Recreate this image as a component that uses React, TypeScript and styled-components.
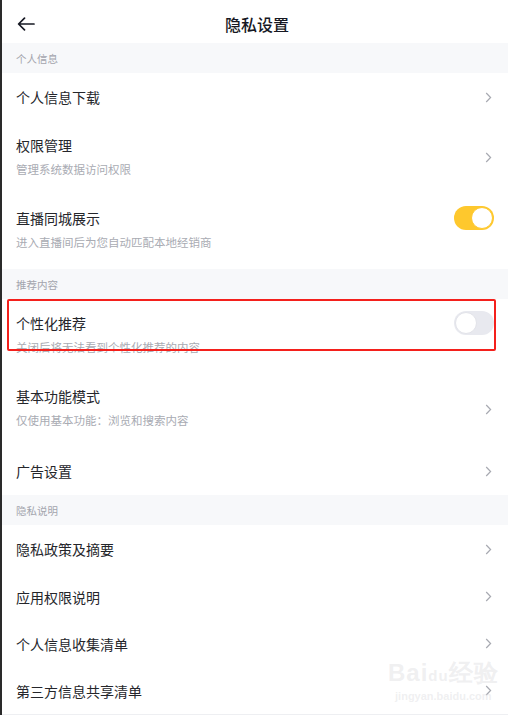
import styled, { createGlobalStyle } from "styled-components";

const GlobalStyle = createGlobalStyle`
  html, body {
    margin: 0;
    padding: 0;
    background: #ffffff;
  }
  body {
    font-family: "Noto Sans CJK SC", "Noto Sans", sans-serif;
    -webkit-font-smoothing: antialiased;
  }
`;

interface RowData {
  title: string;
  sub?: string;
  kind: "arrow" | "on" | "off";
  h: number;
  highlight?: boolean;
}

interface Group {
  label: string;
  rows: RowData[];
}

const groups: Group[] = [
  {
    label: "个人信息",
    rows: [
      { title: "个人信息下载", kind: "arrow", h: 48 },
      { title: "权限管理", sub: "管理系统数据访问权限", kind: "arrow", h: 73 },
      { title: "直播同城展示", sub: "进入直播间后为您自动匹配本地经销商", kind: "on", h: 75 },
    ],
  },
  {
    label: "推荐内容",
    rows: [
      { title: "个性化推荐", sub: "关闭后将无法看到个性化推荐的内容", kind: "off", h: 73, highlight: true },
      { title: "基本功能模式", sub: "仅使用基本功能：浏览和搜索内容", kind: "arrow", h: 75 },
      { title: "广告设置", kind: "arrow", h: 48 },
    ],
  },
  {
    label: "隐私说明",
    rows: [
      { title: "隐私政策及摘要", kind: "arrow", h: 48 },
      { title: "应用权限说明", kind: "arrow", h: 47 },
      { title: "个人信息收集清单", kind: "arrow", h: 47 },
      { title: "第三方信息共享清单", kind: "arrow", h: 47 },
    ],
  },
];

const Chevron = () => (
  <ChevronBox width="7" height="11" viewBox="0 0 7 11">
    <polyline points="1.2,1 5.6,5.5 1.2,10" fill="none" stroke="#a7a9b1" strokeWidth="1.2" />
  </ChevronBox>
);

const BackArrow = () => (
  <svg width="18" height="14" viewBox="0 0 18 14">
    <path d="M17 7 H2 M7.5 1.2 L1.6 7 L7.5 12.8" fill="none" stroke="#161823" strokeWidth="1.7" strokeLinecap="round" strokeLinejoin="round" />
  </svg>
);

const SettingRow = ({ row }: { row: RowData }) => (
  <Row h={row.h} double={!!row.sub}>
    <TextCol>
      <Title>{row.title}</Title>
      {row.sub && <Sub>{row.sub}</Sub>}
    </TextCol>
    {row.kind === "arrow" && <Chevron />}
    {row.kind !== "arrow" && (
      <Switch on={row.kind === "on"}>
        <Knob on={row.kind === "on"} />
      </Switch>
    )}
    {row.highlight && <Highlight />}
  </Row>
);

export default function App() {
  return (
    <>
      <GlobalStyle />
      <Page>
        <Header>
          <BackButton>
            <BackArrow />
          </BackButton>
          <HeaderTitle>隐私设置</HeaderTitle>
        </Header>
        {groups.map((g) => (
          <section key={g.label}>
            <GroupLabel>{g.label}</GroupLabel>
            {g.rows.map((r) => (
              <SettingRow key={r.title} row={r} />
            ))}
          </section>
        ))}
        <BottomLine />
        <Watermark>
          <WmMain>Bai<WmPaw>du</WmPaw>经验</WmMain>
          <WmSub>jingyan.baidu.com</WmSub>
        </Watermark>
      </Page>
    </>
  );
}

const Page = styled.div`
  position: relative;
  width: 508px;
  height: 715px;
  box-sizing: border-box;
  border-left: 2px solid #2a2a2a;
  overflow: hidden;
  background: #ffffff;
`;

const Header = styled.header`
  position: relative;
  height: 43px;
  display: flex;
  align-items: center;
  justify-content: center;
`;

const BackButton = styled.div`
  position: absolute;
  left: 15px;
  top: 17px;
  display: flex;
`;

const HeaderTitle = styled.h1`
  margin: 0;
  font-size: 16px;
  font-weight: 500;
  color: #161823;
  line-height: 20px;
  padding-top: 4px;
  margin-left: 4px;
`;

const GroupLabel = styled.div`
  height: 30px;
  background: #f7f8fa;
  padding-left: 14px;
  display: flex;
  align-items: center;
  font-size: 10.5px;
  color: #a3a5ad;
`;

const Row = styled.div<{ h: number; double: boolean }>`
  position: relative;
  height: ${(p) => p.h}px;
  box-sizing: border-box;
  display: flex;
  align-items: ${(p) => (p.double ? "flex-start" : "center")};
  padding: ${(p) => (p.double ? "14px" : "0 14px")};
`;

const TextCol = styled.div`
  flex: 1;
  display: flex;
  flex-direction: column;
  gap: 6px;
`;

const Title = styled.div`
  font-size: 14px;
  line-height: 20px;
  color: #25262b;
`;

const Sub = styled.div`
  font-size: 11.5px;
  line-height: 16px;
  color: #a9abb3;
`;

const ChevronBox = styled.svg`
  align-self: center;
  margin-right: 2px;
`;

const Switch = styled.div<{ on: boolean }>`
  width: 40px;
  height: 24px;
  margin-top: -2px;
  border-radius: 12px;
  box-sizing: border-box;
  background: ${(p) => (p.on ? "#fec82d" : "#e8e9ef")};
  display: flex;
  align-items: center;
  justify-content: ${(p) => (p.on ? "flex-end" : "flex-start")};
  padding: 1px;
`;

const Knob = styled.div<{ on: boolean }>`
  width: 22px;
  height: 22px;
  border-radius: 50%;
  background: #ffffff;
  box-sizing: border-box;
  border: 1px solid ${(p) => (p.on ? "#fec82d" : "#e2e3e9")};
`;

const Highlight = styled.div`
  position: absolute;
  left: 5px;
  right: 12px;
  top: 0;
  height: 52px;
  border: 2px solid #f4201c;
  border-radius: 2px;
  box-sizing: border-box;
  pointer-events: none;
`;

const BottomLine = styled.div`
  height: 1px;
  background: #eeeff2;
`;

const Watermark = styled.div`
  position: absolute;
  left: 386px;
  top: 660px;
  display: flex;
  flex-direction: column;
  align-items: center;
  color: rgba(215, 215, 220, 0.4);
  font-family: "Liberation Sans", sans-serif;
  pointer-events: none;
`;

const WmMain = styled.div`
  font-size: 24px;
  font-weight: 700;
  letter-spacing: 1px;
  line-height: 26px;
`;

const WmPaw = styled.span`
  font-size: 15px;
`;

const WmSub = styled.div`
  font-size: 11px;
  font-weight: 700;
  line-height: 14px;
`;
